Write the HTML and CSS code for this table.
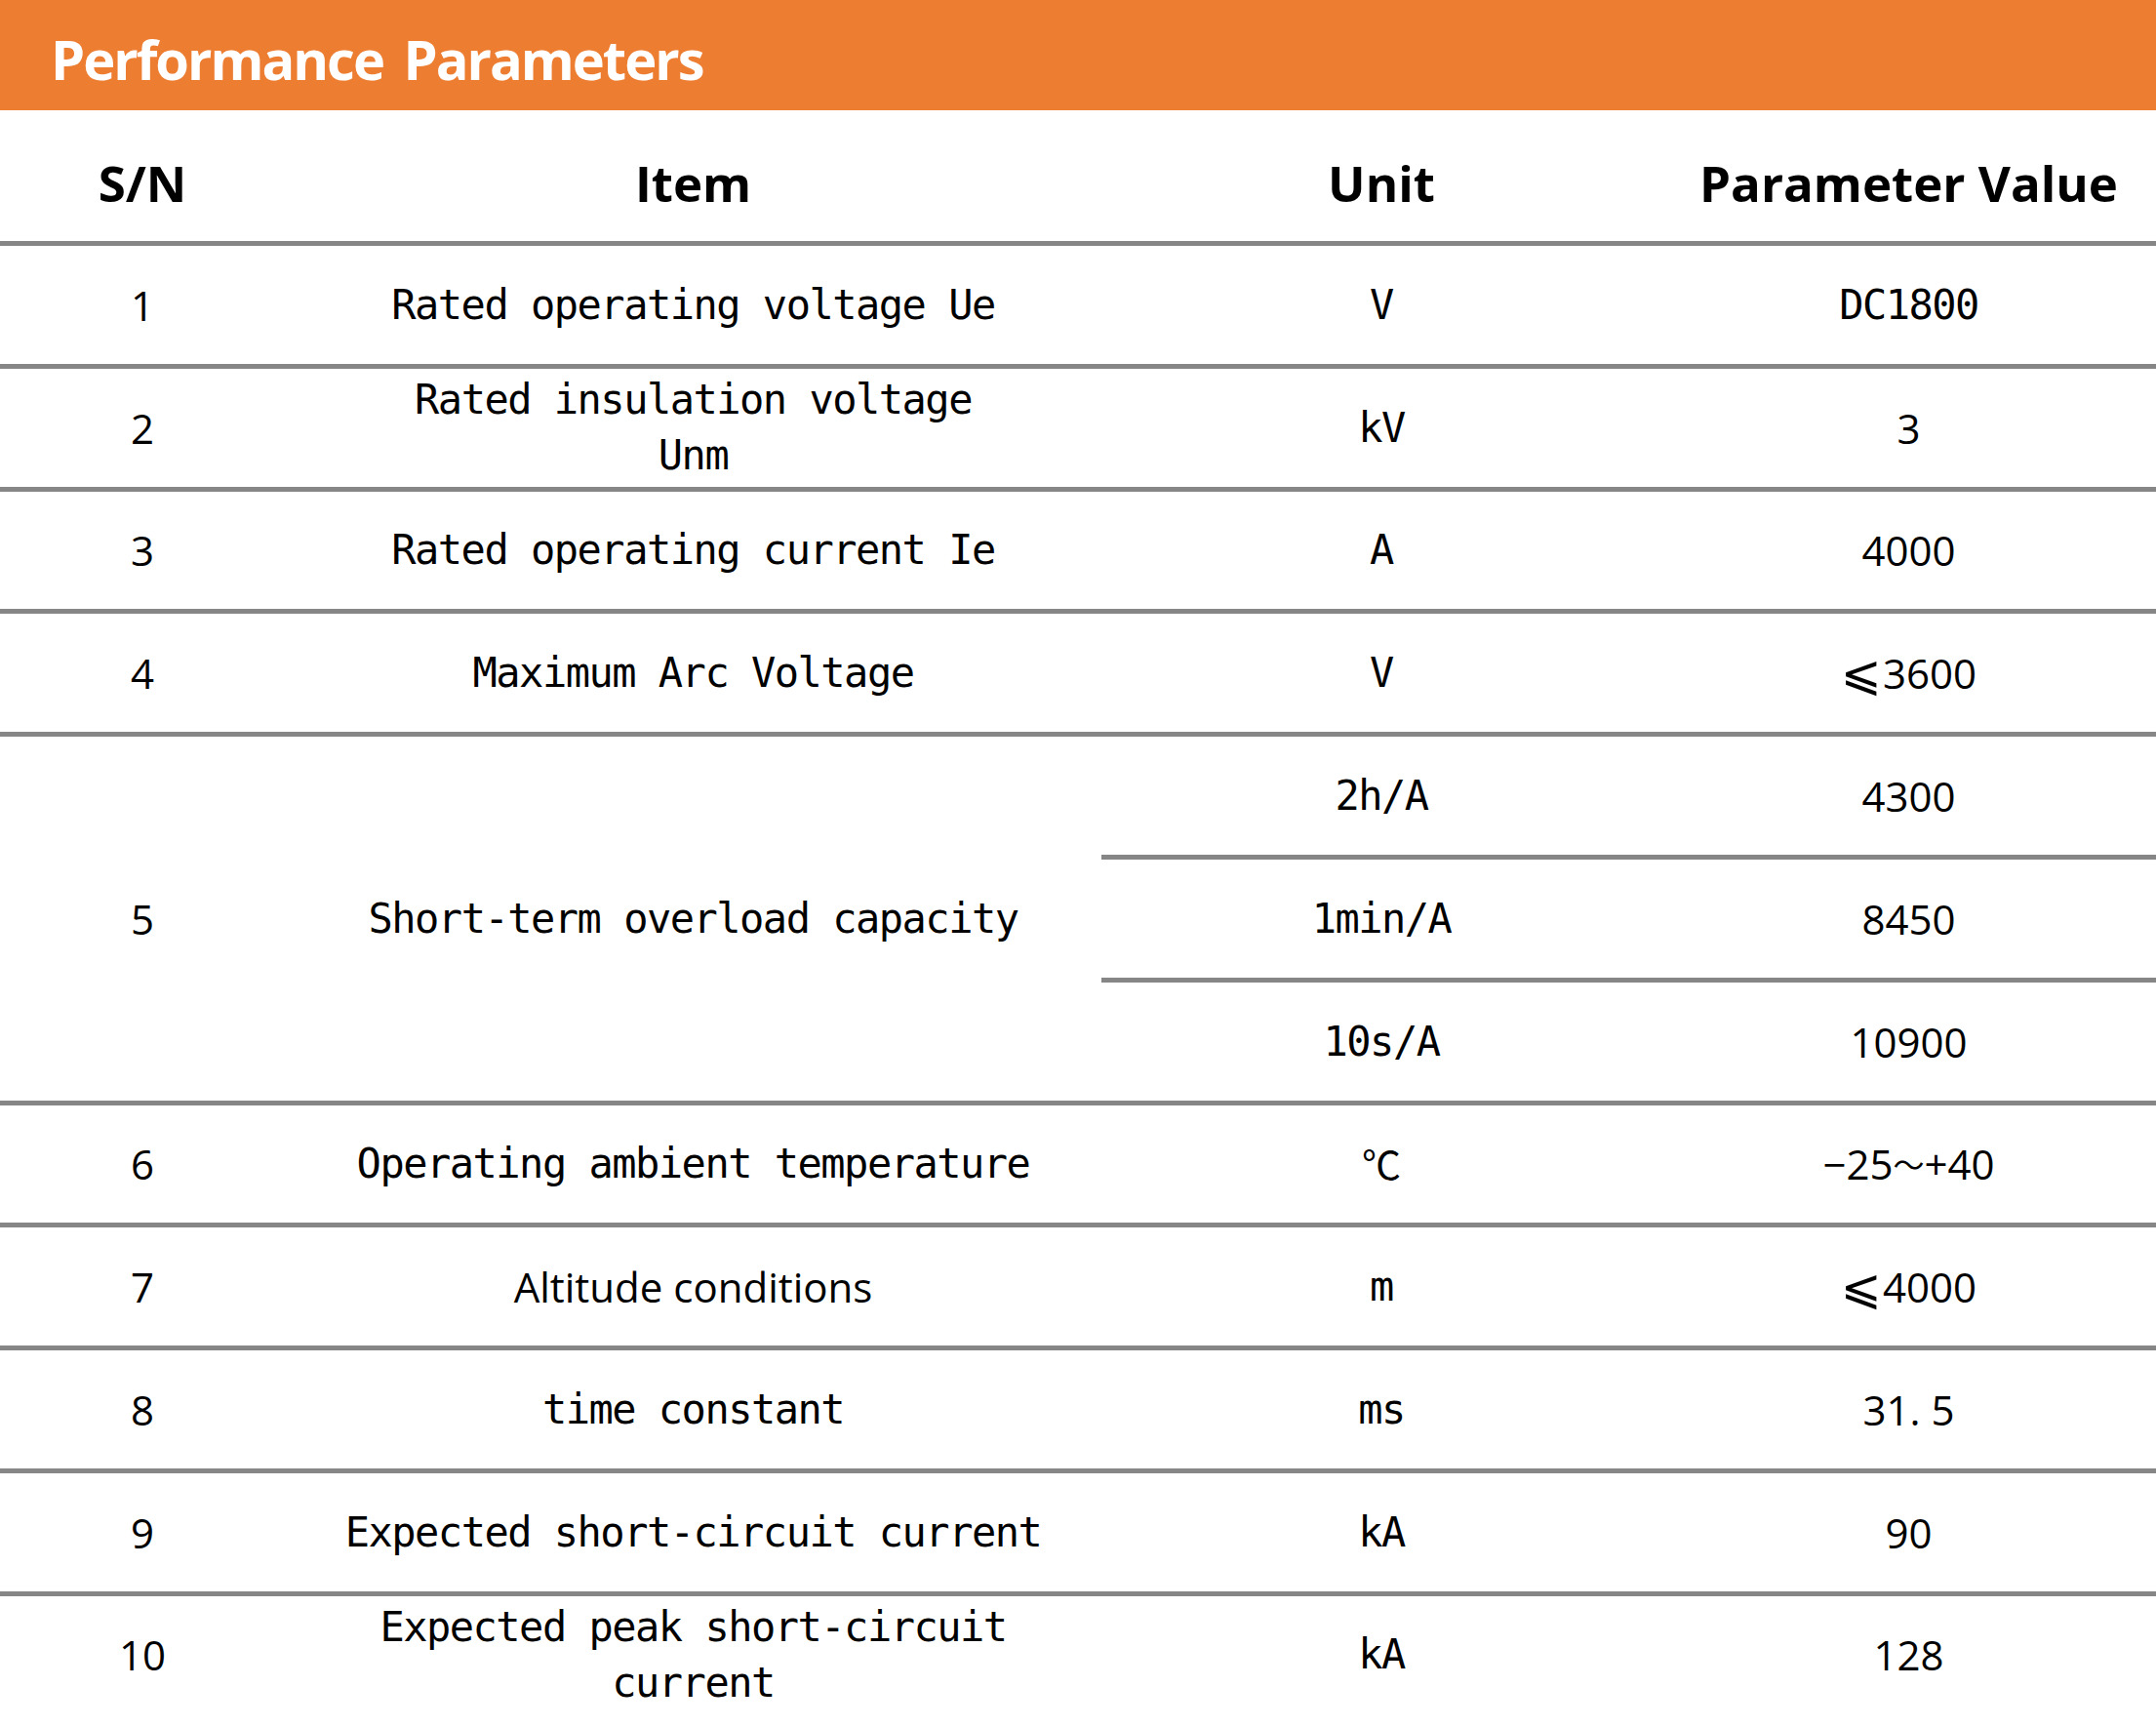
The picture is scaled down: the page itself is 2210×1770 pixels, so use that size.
FILE: index.html
```html
<!DOCTYPE html>
<html lang="en">
<head>
<meta charset="utf-8">
<title>Performance Parameters</title>
<link rel="stylesheet" href="styles.css">
</head>
<body>
<main class="sheet">
  <header class="banner">
    <h1 class="banner-title">Performance Parameters</h1>
  </header>
  <div class="grid" role="table">
    <div class="hd" role="columnheader">S/N</div>
    <div class="hd" role="columnheader">Item</div>
    <div class="hd" role="columnheader">Unit</div>
    <div class="hd" role="columnheader">Parameter Value</div>

    <div class="cell sans">1</div>
    <div class="cell mono">Rated operating voltage Ue</div>
    <div class="cell mono">V</div>
    <div class="cell mono">DC1800</div>

    <div class="cell sans">2</div>
    <div class="cell mono two">Rated insulation voltage<br>Unm</div>
    <div class="cell mono">kV</div>
    <div class="cell sans">3</div>

    <div class="cell sans">3</div>
    <div class="cell mono">Rated operating current Ie</div>
    <div class="cell mono">A</div>
    <div class="cell sans">4000</div>

    <div class="cell sans">4</div>
    <div class="cell mono">Maximum Arc Voltage</div>
    <div class="cell mono">V</div>
    <div class="cell sans"><span class="le">⩽</span>3600</div>

    <div class="cell sans span3">5</div>
    <div class="cell mono span3">Short-term overload capacity</div>
    <div class="cell mono">2h/A</div>
    <div class="cell sans">4300</div>
    <div class="cell mono">1min/A</div>
    <div class="cell sans">8450</div>
    <div class="cell mono">10s/A</div>
    <div class="cell sans">10900</div>

    <div class="cell sans">6</div>
    <div class="cell mono">Operating ambient temperature</div>
    <div class="cell cjk">℃</div>
    <div class="cell sans">−25<span class="tilde">～</span>+40</div>

    <div class="cell sans">7</div>
    <div class="cell sans">Altitude conditions</div>
    <div class="cell mono">m</div>
    <div class="cell sans"><span class="le">⩽</span>4000</div>

    <div class="cell sans">8</div>
    <div class="cell mono">time constant</div>
    <div class="cell mono">ms</div>
    <div class="cell sans">31.&nbsp;5</div>

    <div class="cell sans">9</div>
    <div class="cell mono">Expected short-circuit current</div>
    <div class="cell mono">kA</div>
    <div class="cell sans">90</div>

    <div class="cell sans last">10</div>
    <div class="cell mono two last">Expected peak short-circuit<br>current</div>
    <div class="cell mono last">kA</div>
    <div class="cell sans last">128</div>
  </div>
</main>
</body>
</html>
```
FILE: styles.css
```css
html, body {
  margin: 0;
  padding: 0;
  background: #ffffff;
}

.sheet {
  width: 2210px;
  color: #000000;
}

.banner {
  height: 113px;
  background: #ed7d31;
  display: flex;
  align-items: center;
  padding-left: 52px;
  box-sizing: border-box;
}

.banner-title {
  margin: 0;
  font-family: "Open Sans", "Liberation Sans", sans-serif;
  font-weight: 700;
  font-size: 56px;
  line-height: 1;
  color: #ffffff;
  letter-spacing: -2px;
  word-spacing: 8px;
  padding-top: 6px;
}

.grid {
  display: grid;
  grid-template-columns: 292px 837px 574px 507px;
  grid-template-rows: 134px repeat(11, 125.8px) 139px;
}

.hd {
  display: flex;
  align-items: center;
  justify-content: center;
  padding-top: 14px;
  box-sizing: border-box;
  font-family: "Open Sans", "Liberation Sans", sans-serif;
  font-weight: 700;
  font-size: 51px;
  line-height: 1;
}

.cell {
  display: flex;
  align-items: center;
  justify-content: center;
  text-align: center;
  box-sizing: border-box;
  border-top: 5px solid #868686;
  font-size: 42px;
  line-height: 57px;
  white-space: nowrap;
}

.span3 {
  grid-row: span 3;
}

.last {
  padding-bottom: 14px;
}

.mono {
  font-family: "DejaVu Sans Mono", "Liberation Mono", monospace;
  letter-spacing: -1.5px;
}

.sans {
  font-family: "Open Sans", "Liberation Sans", sans-serif;
}

.cjk {
  font-family: "Noto Sans CJK SC", "DejaVu Sans", sans-serif;
  font-size: 40px;
}

.le {
  font-family: "DejaVu Sans", "Noto Sans CJK SC", sans-serif;
  font-size: 50px;
  line-height: 1;
  margin-right: 1px;
}

.tilde {
  font-family: "Noto Sans CJK SC", sans-serif;
  font-size: 32px;
}
```
